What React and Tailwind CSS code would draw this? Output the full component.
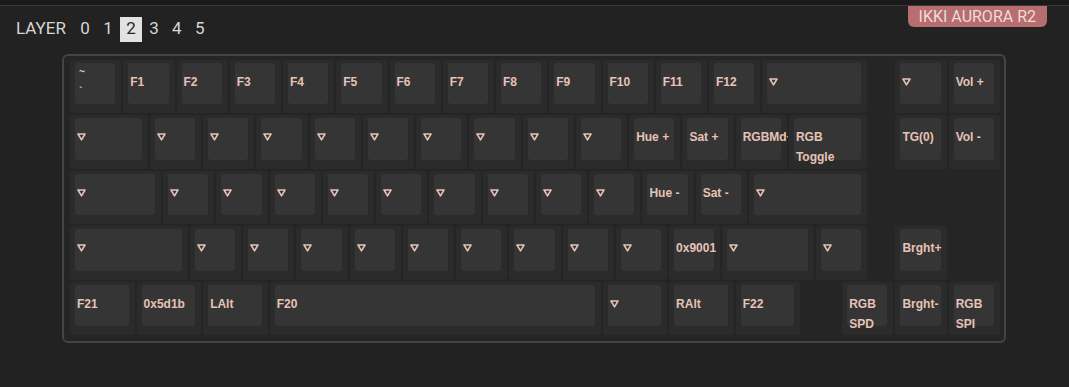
import React from 'react';

// key slot widths, 1u = 53.26px
const W = {
  '0.5': 'w-[26.63px]',
  '0.75': 'w-[39.94px]',
  '1': 'w-[53.26px]',
  '1.25': 'w-[66.57px]',
  '1.5': 'w-[79.89px]',
  '1.75': 'w-[93.2px]',
  '2': 'w-[106.51px]',
  '2.25': 'w-[119.83px]',
  '6.25': 'w-[332.86px]',
};

const T = 'TRNS';

const rows = [
  [
    { l: 'GRAVE' }, { l: 'F1' }, { l: 'F2' }, { l: 'F3' }, { l: 'F4' }, { l: 'F5' }, { l: 'F6' },
    { l: 'F7' }, { l: 'F8' }, { l: 'F9' }, { l: 'F10' }, { l: 'F11' }, { l: 'F12' },
    { l: T, u: 2 }, { gap: 0.5 }, { l: T }, { l: 'Vol +' },
  ],
  [
    { l: T, u: 1.5 }, { l: T }, { l: T }, { l: T }, { l: T }, { l: T }, { l: T }, { l: T }, { l: T }, { l: T },
    { l: 'Hue +' }, { l: 'Sat +' }, { l: 'RGBMd+' }, { l: 'RGB Toggle', u: 1.5 },
    { gap: 0.5 }, { l: 'TG(0)' }, { l: 'Vol -' },
  ],
  [
    { l: T, u: 1.75 }, { l: T }, { l: T }, { l: T }, { l: T }, { l: T }, { l: T }, { l: T }, { l: T }, { l: T },
    { l: 'Hue -' }, { l: 'Sat -' }, { l: T, u: 2.25 },
  ],
  [
    { l: T, u: 2.25 }, { l: T }, { l: T }, { l: T }, { l: T }, { l: T }, { l: T }, { l: T }, { l: T }, { l: T },
    { l: '0x9001' }, { l: T, u: 1.75 }, { l: T }, { gap: 0.5 }, { l: 'Brght+' },
  ],
  [
    { l: 'F21', u: 1.25 }, { l: '0x5d1b', u: 1.25 }, { l: 'LAlt', u: 1.25 }, { l: 'F20', u: 6.25 },
    { l: T, u: 1.25 }, { l: 'RAlt', u: 1.25 }, { l: 'F22', u: 1.25 }, { gap: 0.75 },
    { l: 'RGB SPD' }, { l: 'Brght-' }, { l: 'RGB SPI' },
  ],
];

function Legend({ l }) {
  if (l === T) {
    return (
      <div className="h-[20px] flex items-center">
        <svg width="9" height="8" viewBox="0 0 9 8" className="block">
          <polygon points="1,1 8,1 4.5,6.8" fill="none" stroke="#e6c3b6" strokeWidth="1.6" strokeLinejoin="round" />
        </svg>
      </div>
    );
  }
  if (l === 'GRAVE') {
    return (
      <div className="-mt-[10px] pl-[2px] text-[10px] leading-[19px] font-bold text-[#e6c3b6]">
        <div>~</div>
        <div>`</div>
      </div>
    );
  }
  return <div className="text-[12px] leading-[20px] font-bold text-[#e6c3b6]">{l}</div>;
}

function Key({ l, u = 1 }) {
  return (
    <div className={`${W[u]} h-[55.5px] shrink-0 p-[1px] overflow-hidden`}>
      <div className="h-[53.5px] rounded-[3px] bg-[#2b2b2b] pt-[3px] pl-[5px] pr-[6px]">
        <div className="h-[41.5px] rounded-[3px] bg-[#353535] pl-[2px] pt-[9px]">
          <Legend l={l} />
        </div>
      </div>
    </div>
  );
}

export default function App() {
  return (
    <div className="w-[1069px] h-[387px] overflow-hidden bg-[#222222] font-['Liberation_Sans',Arial,sans-serif]">
      <div className="h-[6px] bg-[#1a1a1a] border-b border-[#393939]"></div>

      <div className="flex items-start justify-between pl-4 pr-[22px]">
        <div className="mt-[10.7px] h-[25px] flex items-center text-[17px] text-[#d6d6d6] font-['Roboto',sans-serif]">
          <span className="mr-[7.7px]">LAYER</span>
          {[0, 1, 2, 3, 4, 5].map((n) => (
            <span
              key={n}
              className={`h-[25px] px-[6.7px] flex items-center ${n === 2 ? 'bg-[#e2e2e2] text-[#262626]' : ''}`}
            >
              {n}
            </span>
          ))}
        </div>
        <div className="h-[21px] px-[11px] rounded-b-[6px] bg-[#b86d6e] text-[#ecdcdc] text-[16px] leading-[21px] font-['Roboto',sans-serif]">
          IKKI AURORA R2
        </div>
      </div>

      <div className="mt-[12.3px] ml-[62px] w-[944px] h-[289px] border-2 border-[#444444] rounded-[6px] bg-[#252525] pl-[5px] pr-[3px] pt-[3px]">
        {rows.map((row, i) => (
          <div key={i} className="flex">
            {row.map((k, j) =>
              k.gap ? <div key={j} className={`${W[k.gap]} shrink-0`}></div> : <Key key={j} l={k.l} u={k.u} />
            )}
          </div>
        ))}
      </div>
    </div>
  );
}
